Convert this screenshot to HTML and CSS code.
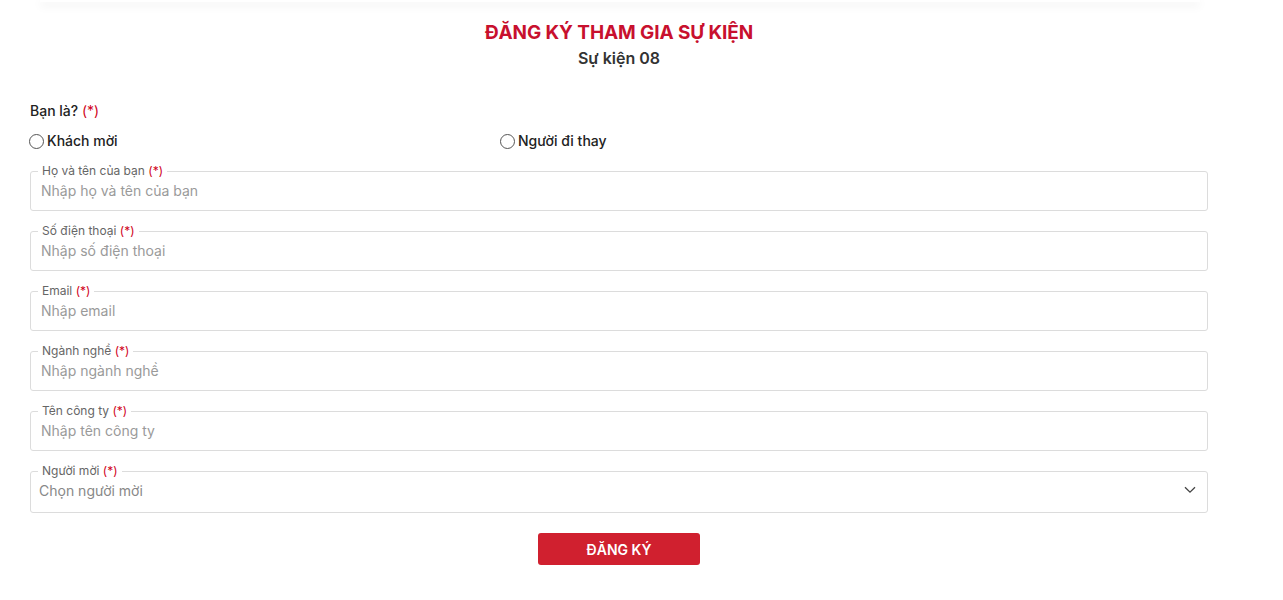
FILE: index.html
```html
<!DOCTYPE html>
<html lang="vi">
<head>
<meta charset="utf-8">
<title>Đăng ký tham gia sự kiện</title>
<link rel="stylesheet" href="styles.css">
</head>
<body>
<div class="topbar"></div>
<main class="form">
  <h1 class="title">ĐĂNG KÝ THAM GIA SỰ KIỆN</h1>
  <h2 class="subtitle">Sự kiện 08</h2>

  <div class="question">Bạn là? <span class="req">(*)</span></div>
  <div class="radios">
    <label class="radio"><input type="radio" name="role"><span>Khách mời</span></label>
    <label class="radio"><input type="radio" name="role"><span>Người đi thay</span></label>
  </div>

  <fieldset class="field">
    <legend>Họ và tên của bạn <span class="req">(*)</span></legend>
    <input type="text" placeholder="Nhập họ và tên của bạn">
  </fieldset>
  <fieldset class="field">
    <legend>Số điện thoại <span class="req">(*)</span></legend>
    <input type="text" placeholder="Nhập số điện thoại">
  </fieldset>
  <fieldset class="field">
    <legend>Email <span class="req">(*)</span></legend>
    <input type="text" placeholder="Nhập email">
  </fieldset>
  <fieldset class="field">
    <legend>Ngành nghề <span class="req">(*)</span></legend>
    <input type="text" placeholder="Nhập ngành nghề">
  </fieldset>
  <fieldset class="field">
    <legend>Tên công ty <span class="req">(*)</span></legend>
    <input type="text" placeholder="Nhập tên công ty">
  </fieldset>
  <fieldset class="field field-select">
    <legend>Người mời <span class="req">(*)</span></legend>
    <div class="select">
      <span class="select-text">Chọn người mời</span>
      <svg class="chevron" width="12" height="8" viewBox="0 0 12 8"><path d="M1 1.2 L6 6.2 L11 1.2" fill="none" stroke="#444" stroke-width="1.3"/></svg>
    </div>
  </fieldset>

  <div class="actions">
    <button class="submit" type="button">ĐĂNG KÝ</button>
  </div>
</main>
</body>
</html>
```

FILE: styles.css
```css
* { box-sizing: border-box; }
body {
  margin: 0;
  background: #fff;
  font-family: Inter, "Noto Sans", "Liberation Sans", sans-serif;
  color: #222;
}
.topbar {
  height: 2px;
  width: 1160px;
  margin: 0 0 0 40px;
  background: #fff;
  box-shadow: 0 3px 10px rgba(0,0,0,0.13);
}
.form {
  width: 1178px;
  margin-left: 30px;
}
.title {
  margin: 19px 0 0;
  text-align: center;
  font-size: 19px;
  line-height: 24px;
  font-weight: 700;
  color: #c8102e;
  letter-spacing: -0.1px;
}
.subtitle {
  margin: 3px 0 0;
  text-align: center;
  font-size: 16px;
  line-height: 20px;
  font-weight: 600;
  color: #333;
}
.question {
  margin-top: 33px;
  font-size: 14px;
  line-height: 20px;
  font-weight: 500;
  color: #222;
}
.req { color: #d0021b; font-weight: 400; }
.radios {
  margin-top: 10px;
  display: grid;
  grid-template-columns: 471px 1fr;
}
.radio {
  display: flex;
  align-items: center;
  gap: 3px;
  font-size: 14px;
  line-height: 20px;
  font-weight: 500;
  color: #222;
  margin-left: -1px;
}
.radio input {
  appearance: none;
  -webkit-appearance: none;
  width: 15px;
  height: 15px;
  margin: 0;
  border: 1px solid #555;
  border-radius: 50%;
  background: #fff;
}
.field {
  margin: 13px 0 0;
  padding: 0 10px 8px;
  border: 1px solid #dcdcdc;
  border-radius: 3px;
  min-width: 0;
}
.field legend {
  margin-left: -3px;
  padding: 0 4px;
  font-size: 12px;
  line-height: 14px;
  color: #666;
}
.field input {
  display: block;
  width: 100%;
  height: 24px;
  border: 0;
  outline: none;
  padding: 0;
  margin: 0;
  font-family: inherit;
  font-size: 14px;
  color: #222;
  background: transparent;
}
.field input::placeholder { color: #9a9a9a; }
.field-select { padding: 0 10px 10px 8px; }
.field-select legend { margin-left: -1px; }
.select {
  display: flex;
  align-items: center;
  justify-content: space-between;
  height: 24px;
  padding-right: 1px;
}
.select-text {
  font-size: 14px;
  color: #888;
}
.chevron { display: block; }
.actions {
  margin-top: 20px;
  display: flex;
  justify-content: center;
}
.submit {
  width: 162px;
  height: 32px;
  border: 0;
  border-radius: 3px;
  background: #d0202f;
  color: #fff;
  font-family: inherit;
  font-size: 14px;
  font-weight: 600;
}
```
